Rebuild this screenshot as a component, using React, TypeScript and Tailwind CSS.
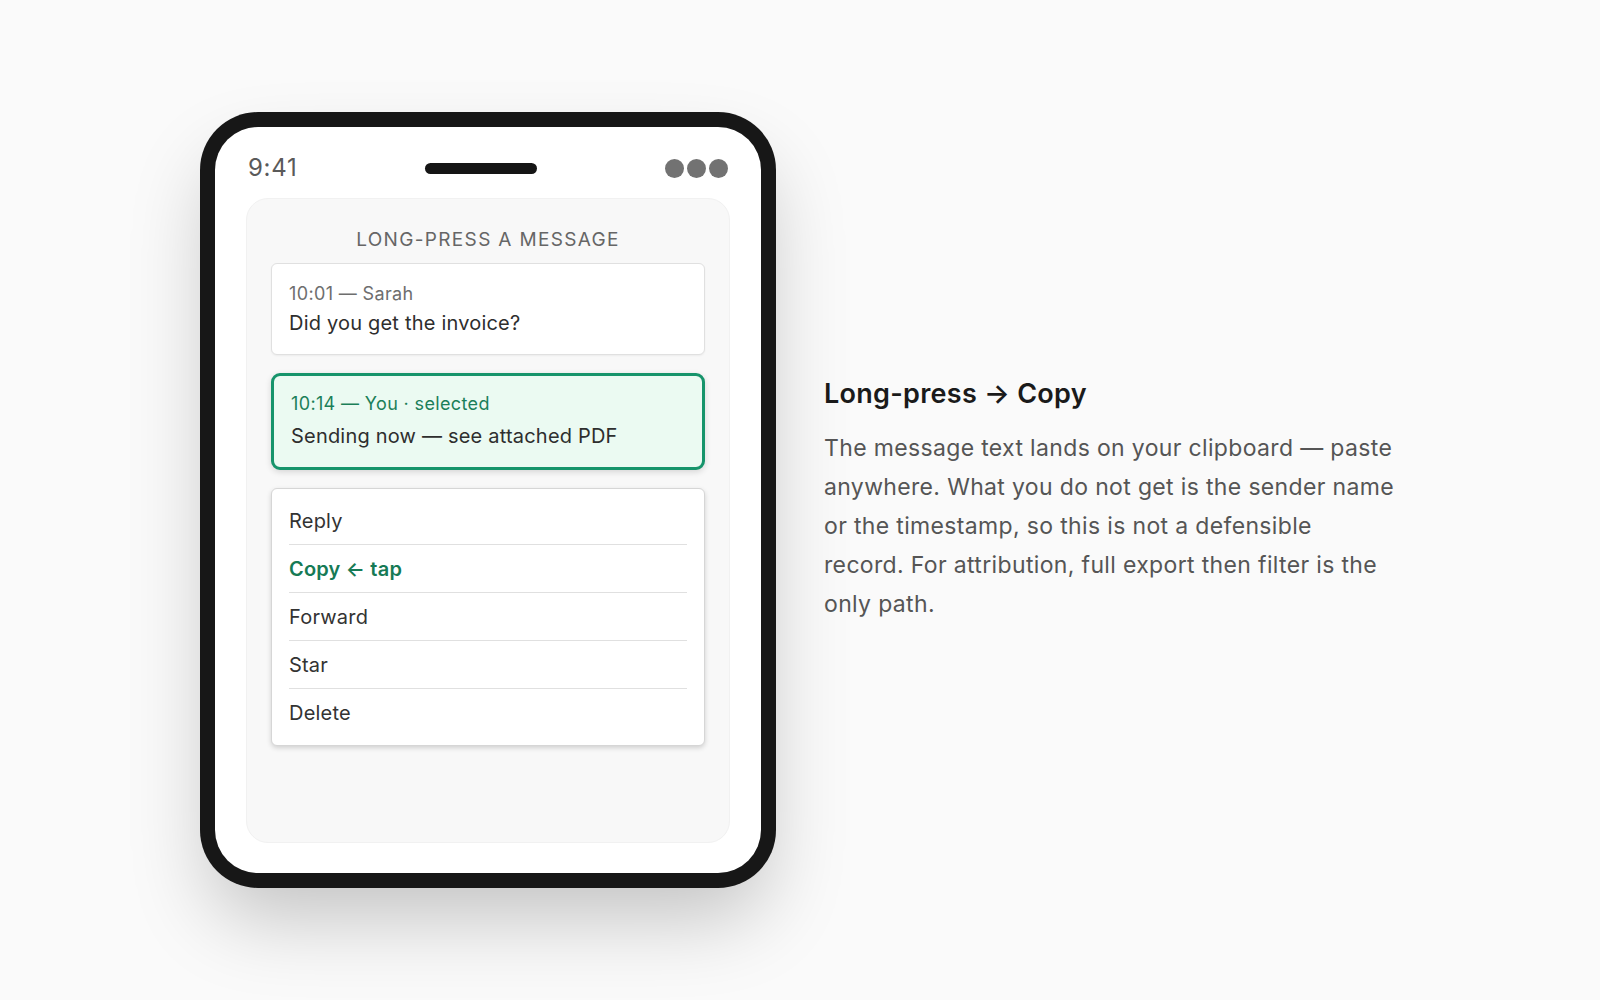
const FONT = { fontFamily: 'Inter, "Noto Sans", sans-serif' };

const MENU = ['Reply', 'Copy', 'Forward', 'Star', 'Delete'];

function StatusBar() {
  return (
    <div className="flex h-[52px] items-center justify-between px-[2px] mt-[2px] mb-[4px]">
      <span className="text-[24px] leading-none tracking-[0.03em] text-[#5a5a5a]">9:41</span>
      <div className="h-[11px] w-[112px] rounded-full bg-[#151515]" />
      <div className="flex gap-[3px]">
        <div className="h-[19px] w-[19px] rounded-full bg-[#727272]" />
        <div className="h-[19px] w-[19px] rounded-full bg-[#727272]" />
        <div className="h-[19px] w-[19px] rounded-full bg-[#727272]" />
      </div>
    </div>
  );
}

function MessageCard({ meta, body, selected }: { meta: string; body: string; selected?: boolean }) {
  return (
    <div
      className={
        selected
          ? 'rounded-[9px] border-[3px] border-[#16946b] bg-[#ebfaf2] px-[17px] pt-[16px] pb-[17px] shadow-[0_2px_6px_rgba(0,0,0,0.14)]'
          : 'rounded-[6px] border border-[#e0e0e0] bg-white px-[17px] pt-[18px] pb-[17px] shadow-[0_1px_2px_rgba(0,0,0,0.05)]'
      }
    >
      <div
        className={
          selected
            ? 'text-[18px] leading-[24px] tracking-[0.02em] text-[#1b7f59]'
            : 'text-[18px] leading-[24px] tracking-[0.02em] text-[#6e6e6e]'
        }
      >
        {meta}
      </div>
      <div
        className={
          selected
            ? 'mt-[6px] text-[20px] leading-[28px] tracking-[0.01em] text-[#2e2e2e]'
            : 'mt-[3px] text-[20px] leading-[28px] tracking-[0.01em] text-[#2e2e2e]'
        }
      >
        {body}
      </div>
    </div>
  );
}

function ActionMenu() {
  return (
    <div className="rounded-[6px] border border-[#d6d6d6] bg-white px-[17px] py-2 shadow-[0_2px_5px_rgba(0,0,0,0.16)]">
      {MENU.map((item, i) => (
        <div
          key={item}
          className={
            'flex h-[48px] items-center ' + (i < MENU.length - 1 ? 'border-b border-[#e0e0e0]' : '')
          }
        >
          {item === 'Copy' ? (
            <span className="text-[20px] font-semibold tracking-[0.01em] text-[#167a55]">Copy ← tap</span>
          ) : (
            <span className="text-[20px] tracking-[0.01em] text-[#333333]">{item}</span>
          )}
        </div>
      ))}
    </div>
  );
}

function Phone() {
  return (
    <div className="h-[776px] w-[576px] shrink-0 rounded-[58px] bg-[#171717] p-[15px] shadow-[0_40px_80px_-10px_rgba(0,0,0,0.22)]">
      <div className="flex h-full flex-col rounded-[43px] bg-white px-[31px] pt-[13px] pb-[30px]">
        <StatusBar />
        <div className="flex flex-1 flex-col rounded-[22px] border border-[#f1f1f1] bg-[#f8f8f8] px-[24px] pt-[27px]">
          <div className="mb-[9px] text-center text-[19px] leading-[28px] tracking-[0.07em] text-[#666666]">
            LONG-PRESS A MESSAGE
          </div>
          <div className="flex flex-col gap-[18px]">
            <MessageCard meta="10:01 — Sarah" body="Did you get the invoice?" />
            <MessageCard meta="10:14 — You · selected" body="Sending now — see attached PDF" selected />
            <ActionMenu />
          </div>
        </div>
      </div>
    </div>
  );
}

export default function App() {
  return (
    <div className="flex h-[1000px] w-full items-center justify-center gap-[48px] bg-[#fafafa] pr-[5px]" style={FONT}>
      <Phone />
      <div className="w-[571px]">
        <h2 className="text-[27px] font-semibold leading-[34px] tracking-[0.01em] text-[#1a1a1a]">
          Long-press → Copy
        </h2>
        <p className="mt-[18px] text-[23px] leading-[39px] tracking-[0.015em] text-[#555555]">
          The message text lands on your clipboard — paste anywhere. What you do not get is the sender name or the
          timestamp, so this is not a defensible record. For attribution, full export then filter is the only path.
        </p>
      </div>
    </div>
  );
}
